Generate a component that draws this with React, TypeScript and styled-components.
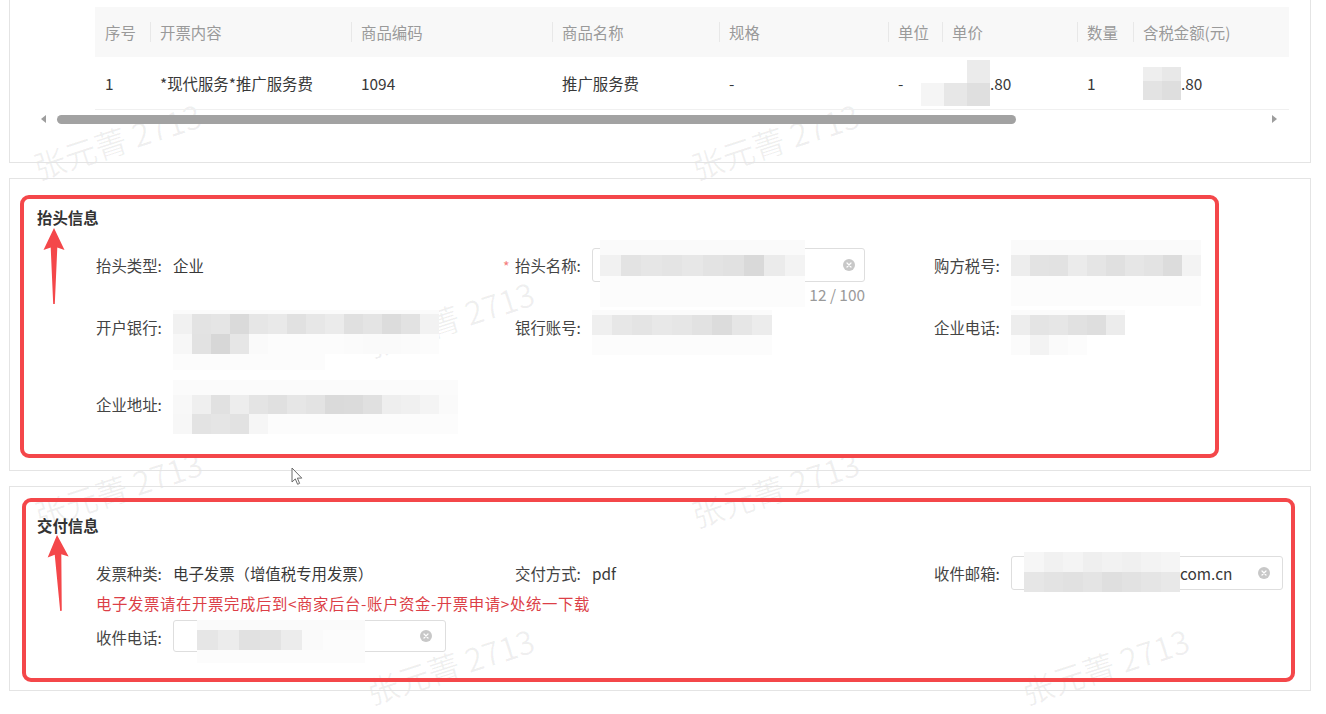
import React from "react";
import styled, { createGlobalStyle } from "styled-components";

const FONT = `"Noto Sans CJK SC", "Noto Sans", "Liberation Sans", sans-serif`;

const GlobalStyle = createGlobalStyle`
  * { box-sizing: border-box; }
  html, body { margin: 0; padding: 0; background: #ffffff; }
  body { font-family: ${FONT}; color: #333; }
`;

const Page = styled.main`
  position: relative;
  width: 1326px;
  height: 714px;
  overflow: hidden;
  padding-left: 9px;
  display: flex;
  flex-direction: column;
  gap: 15px;
  font-size: 15.4px;
`;

const Card = styled.section<{ $pt: number; $pb: number; $pl: number; $noTop?: boolean }>`
  position: relative;
  z-index: 1;
  flex: none;
  width: 1302px;
  border: 1px solid #e4e4e4;
  ${(p) => (p.$noTop ? "border-top: none;" : "")}
  padding: ${(p) => `${p.$pt}px 0 ${p.$pb}px ${p.$pl}px`};
`;

/* ---------- table ---------- */
const COLS = "55px 201px 201px 167px 169px 54px 135px 56px 156px";

const Table = styled.div`
  width: 1194px;
  margin-left: 57px;
`;

const HeadRow = styled.div`
  display: grid;
  grid-template-columns: ${COLS};
  height: 50px;
  background: #f8f8f8;
`;

const HeadCell = styled.div<{ $sep?: boolean }>`
  position: relative;
  display: flex;
  align-items: center;
  padding-left: 10px;
  color: #9a9a9a;
  white-space: nowrap;
  ${(p) =>
    p.$sep
      ? `&::before { content: ""; position: absolute; left: 0; top: 15px; width: 1px; height: 20px; background: #e8e8e8; }`
      : ""}
`;

const BodyRow = styled.div`
  display: grid;
  grid-template-columns: ${COLS};
  height: 53px;
  border-bottom: 1px solid #f0f0f0;
`;

const BodyCell = styled.div`
  display: flex;
  align-items: center;
  padding-left: 10px;
  color: #383838;
  white-space: nowrap;
`;

const ScrollBar = styled.div`
  display: flex;
  align-items: center;
  width: 1244px;
  height: 18px;
  padding: 0 5px 0 3px;
`;

const ArrowLeft = styled.span`
  flex: none;
  width: 0;
  height: 0;
  border-top: 4px solid transparent;
  border-bottom: 4px solid transparent;
  border-right: 5px solid #9d9d9d;
`;

const ArrowRight = styled.span`
  flex: none;
  width: 0;
  height: 0;
  border-top: 4px solid transparent;
  border-bottom: 4px solid transparent;
  border-left: 5px solid #9d9d9d;
`;

const Track = styled.div`
  flex: 1;
  display: flex;
  margin: 0 6px 0 11px;
  height: 9px;
`;

const Thumb = styled.div<{ $w: number }>`
  width: ${(p) => p.$w}px;
  height: 9px;
  border-radius: 5px;
  background: #a2a2a2;
`;

/* ---------- mosaic (censor blocks) ---------- */
type MRow = { h: number; c: string[] };
const rep = (n: number, c: string) => Array.from({ length: n }, () => c);

const MosaicBox = styled.div<{ $mt: number; $ml: number; $self: string }>`
  display: flex;
  flex-direction: column;
  flex: none;
  align-self: ${(p) => p.$self};
  margin-top: ${(p) => p.$mt}px;
  margin-left: ${(p) => p.$ml}px;
`;

const MosaicRow = styled.div`
  display: flex;
`;

const MosaicCell = styled.span<{ $w: number; $h: number; $c: string }>`
  display: block;
  flex: none;
  width: ${(p) => p.$w}px;
  height: ${(p) => p.$h}px;
  background: ${(p) => p.$c};
`;

function Mosaic({
  cw,
  rows,
  mt = 0,
  ml = 0,
  self = "flex-start",
}: {
  cw: number;
  rows: MRow[];
  mt?: number;
  ml?: number;
  self?: string;
}) {
  return (
    <MosaicBox $mt={mt} $ml={ml} $self={self}>
      {rows.map((r, i) => (
        <MosaicRow key={i}>
          {r.c.map((c, j) => (
            <MosaicCell key={j} $w={cw} $h={r.h} $c={c || "transparent"} />
          ))}
        </MosaicRow>
      ))}
    </MosaicBox>
  );
}

const mPrice: MRow[] = [
  { h: 23, c: ["", "", "#ebebeb"] },
  { h: 23, c: ["#f5f5f5", "#e7e7e7", "#dfdfdf"] },
];
const mTotal: MRow[] = [
  { h: 14, c: ["#eeeeee", "#e8e8e8"] },
  { h: 19, c: ["#e3e3e3", "#dedede"] },
];
const mName: MRow[] = [
  { h: 15, c: rep(10, "#fafafa") },
  { h: 21, c: ["#f1f1f1", "#e3e3e3", "#e6e6e6", "#e4e4e4", "#e7e7e7", "#e3e3e3", "#e1e1e1", "#d9d9d9", "#ebebeb", "#f3f3f3"] },
  { h: 31, c: rep(10, "#fcfcfc") },
];
const mTax: MRow[] = [
  { h: 15, c: rep(10, "#fafafa") },
  { h: 21, c: ["#ededed", "#e3e3e3", "#e2e2e2", "#ebebeb", "#e5e5e5", "#e0e0e0", "#e6e6e6", "#e3e3e3", "#dcdcdc", "#f3f3f3"] },
  { h: 30, c: rep(10, "#fcfcfc") },
];
const mBank: MRow[] = [
  { h: 4, c: rep(14, "#fbfbfb") },
  { h: 20, c: ["#f1f1f1", "#e3e3e3", "#e5e5e5", "#dadada", "#e6e6e6", "#e9e9e9", "#e1e1e1", "#e7e7e7", "#ebebeb", "#e0e0e0", "#e4e4e4", "#dcdcdc", "#e2e2e2", "#f2f2f2"] },
  { h: 20, c: ["#f7f7f7", "#e2e2e2", "#d7d7d7", "#e6e6e6", "#fafafa", "#fcfcfc", "#fcfcfc", "#fcfcfc", "#fcfcfc", "#fbfbfb", "#fafafa", "#fafafa", "#fbfbfb", "#fcfcfc"] },
  { h: 16, c: rep(8, "#fcfcfc") },
];
const mAcct: MRow[] = [
  { h: 5, c: rep(9, "#fbfbfb") },
  { h: 20, c: ["#efefef", "#e7e7e7", "#e4e4e4", "#e8e8e8", "#e6e6e6", "#e2e2e2", "#dcdcdc", "#e6e6e6", "#ececec"] },
  { h: 20, c: rep(9, "#fcfcfc") },
];
const mPhone: MRow[] = [
  { h: 5, c: rep(6, "#fbfbfb") },
  { h: 20, c: ["#ededed", "#e4e4e4", "#e6e6e6", "#e1e1e1", "#dedede", "#ececec"] },
  { h: 20, c: ["#fbfbfb", "#f3f3f3", "#fafafa", "#fcfcfc", "", ""] },
];
const mAddr: MRow[] = [
  { h: 15, c: rep(15, "#fbfbfb") },
  { h: 19, c: ["#f8f8f8", "#efefef", "#e1e1e1", "#ededed", "#e4e4e4", "#e0e0e0", "#e6e6e6", "#e3e3e3", "#dadada", "#dbdbdb", "#e0e0e0", "#eeeeee", "#f0f0f0", "#f4f4f4", "#fafafa"] },
  { h: 20, c: ["#f7f7f7", "#e3e3e3", "#e5e5e5", "#e2e2e2", "#f6f6f6", "#fcfcfc", "#fcfcfc", "#fcfcfc", "#fcfcfc", "#fcfcfc", "#fcfcfc", "#fcfcfc", "#fcfcfc", "#fcfcfc", "#fcfcfc"] },
];
const mEmail: MRow[] = [
  { h: 20, c: ["#f6f6f6", "#f1f1f1", "#f4f4f4", "#efefef", "#f2f2f2", "#f0f0f0", "#f3f3f3", "#f5f5f5"] },
  { h: 20, c: ["#e6e6e6", "#e3e3e3", "#e1e1e1", "#e4e4e4", "#dfdfdf", "#e2e2e2", "#e5e5e5", "#e8e8e8"] },
];
const mTel: MRow[] = [
  { h: 10, c: rep(8, "#fafafa") },
  { h: 20, c: ["#e6e6e6", "#ececec", "#e1e1e1", "#e3e3e3", "#ececec", "#fafafa", "#fcfcfc", "#fcfcfc"] },
  { h: 13, c: rep(8, "#fcfcfc") },
];

/* ---------- form ---------- */
const Title = styled.h3`
  margin: 0;
  font-size: 15.4px;
  font-weight: 700;
  line-height: 20px;
  color: #333;
`;

const FormGrid = styled.div<{ $rows: string; $mt: number }>`
  display: grid;
  grid-template-columns: 419px 419px 1fr;
  grid-template-rows: ${(p) => p.$rows};
  margin: ${(p) => p.$mt}px 0 0 59px;
`;

const Item = styled.div`
  display: flex;
  align-items: flex-start;
  min-width: 0;
`;

const Label = styled.span`
  flex: none;
  width: 77px;
  line-height: 34px;
  color: #444;
  white-space: nowrap;
`;

const Star = styled.span`
  display: inline-block;
  width: 12px;
  margin-left: -12px;
  color: #f47c7c;
  font-size: 14px;
`;

const Value = styled.span`
  line-height: 34px;
  color: #383838;
  white-space: nowrap;
`;

const Stack = styled.div`
  display: flex;
  flex-direction: column;
  width: 273px;
`;

const InputBox = styled.div<{ $w: number; $h: number; $pl: number; $pr: number }>`
  display: flex;
  align-items: center;
  flex: none;
  width: ${(p) => p.$w}px;
  height: ${(p) => p.$h}px;
  padding: 0 ${(p) => p.$pr}px 0 ${(p) => p.$pl}px;
  border: 1px solid #dedede;
  border-radius: 3px;
`;

const InputText = styled.span`
  color: #383838;
  white-space: nowrap;
`;

const Counter = styled.div`
  margin-top: 2px;
  line-height: 20px;
  text-align: right;
  color: #9a9a9a;
`;

const ClearSvg = styled.svg`
  flex: none;
  margin-left: auto;
  width: 12px;
  height: 12px;
`;

function ClearIcon() {
  return (
    <ClearSvg viewBox="0 0 12 12">
      <circle cx="6" cy="6" r="6" fill="#c8c8c8" />
      <path d="M4 4 L8 8 M8 4 L4 8" stroke="#ffffff" strokeWidth="1.2" strokeLinecap="round" />
    </ClearSvg>
  );
}

const Hint = styled.p`
  margin: 3px 0 0 59px;
  line-height: 20px;
  color: #dc3f47;
  letter-spacing: 0.6px;
  white-space: nowrap;
`;

/* ---------- annotations / overlays ---------- */
const Annot = styled.div<{ $l: number; $t: number; $w: number; $h: number }>`
  position: absolute;
  left: ${(p) => p.$l}px;
  top: ${(p) => p.$t}px;
  width: ${(p) => p.$w}px;
  height: ${(p) => p.$h}px;
  border: 4px solid #f4474a;
  border-radius: 9px;
  pointer-events: none;
  z-index: 2;
`;

const ArrowSvg = styled.svg<{ $l: number; $t: number; $rot: number }>`
  position: absolute;
  left: ${(p) => p.$l}px;
  top: ${(p) => p.$t}px;
  width: 28px;
  height: 82px;
  transform-origin: 14px 3px;
  transform: rotate(${(p) => p.$rot}deg);
  z-index: 2;
  pointer-events: none;
`;

function RedArrow({ l, t, rot = 0 }: { l: number; t: number; rot?: number }) {
  return (
    <ArrowSvg $l={l} $t={t} $rot={rot} viewBox="0 0 28 82">
      <polygon points="14,3 24.5,25 17.3,22.5 14.8,79 13.2,79 10.7,22.5 3.5,25" fill="#f4474a" />
    </ArrowSvg>
  );
}

const WatermarkLayer = styled.div`
  position: absolute;
  inset: 0;
  z-index: 0;
  pointer-events: none;
  overflow: hidden;
`;

const Watermark = styled.span<{ $x: number; $y: number }>`
  position: absolute;
  left: ${(p) => p.$x}px;
  top: ${(p) => p.$y}px;
  transform: translate(-50%, -50%) rotate(-18deg);
  font-size: 32px;
  color: rgba(0, 0, 0, 0.06);
  white-space: nowrap;
`;

const CursorSvg = styled.svg`
  position: absolute;
  left: 291px;
  top: 467px;
  width: 12px;
  height: 19px;
  z-index: 3;
  pointer-events: none;
`;

const WM_POS = [
  [117, 140],
  [775, 140],
  [450, 318],
  [118, 488],
  [775, 488],
  [450, 665],
  [1105, 665],
];

const HEADERS = ["序号", "开票内容", "商品编码", "商品名称", "规格", "单位", "单价", "数量", "含税金额(元)"];

export default function App() {
  return (
    <>
      <GlobalStyle />
      <Page>
        <WatermarkLayer>
          {WM_POS.map(([x, y], i) => (
            <Watermark key={i} $x={x} $y={y}>
              张元菁 2713
            </Watermark>
          ))}
        </WatermarkLayer>

        {/* goods table */}
        <Card $noTop $pt={7} $pb={34} $pl={28}>
          <Table>
            <HeadRow>
              {HEADERS.map((h, i) => (
                <HeadCell key={h} $sep={i > 0}>
                  {h}
                </HeadCell>
              ))}
            </HeadRow>
            <BodyRow>
              <BodyCell>1</BodyCell>
              <BodyCell>*现代服务*推广服务费</BodyCell>
              <BodyCell>1094</BodyCell>
              <BodyCell>推广服务费</BodyCell>
              <BodyCell>-</BodyCell>
              <BodyCell>-</BodyCell>
              <BodyCell>
                <Mosaic cw={23} rows={mPrice} ml={-31} self="center" />
                .80
              </BodyCell>
              <BodyCell>1</BodyCell>
              <BodyCell>
                <Mosaic cw={19} rows={mTotal} self="center" />
                .80
              </BodyCell>
            </BodyRow>
          </Table>
          <ScrollBar>
            <ArrowLeft />
            <Track>
              <Thumb $w={959} />
            </Track>
            <ArrowRight />
          </ScrollBar>
        </Card>

        {/* header info */}
        <Card $pt={28} $pb={35} $pl={27}>
          <Title>抬头信息</Title>
          <FormGrid $rows="62px 77px 48px" $mt={21}>
            <Item>
              <Label>抬头类型:</Label>
              <Value>企业</Value>
            </Item>
            <Item>
              <Label>
                <Star>*</Star>抬头名称:
              </Label>
              <Stack>
                <InputBox $w={273} $h={34} $pl={7} $pr={9}>
                  <Mosaic cw={20.5} rows={mName} mt={-9} />
                  <ClearIcon />
                </InputBox>
                <Counter>12 / 100</Counter>
              </Stack>
            </Item>
            <Item>
              <Label>购方税号:</Label>
              <Mosaic cw={19} rows={mTax} mt={-8} />
            </Item>

            <Item>
              <Label>开户银行:</Label>
              <Mosaic cw={19} rows={mBank} />
            </Item>
            <Item>
              <Label>银行账号:</Label>
              <Mosaic cw={20} rows={mAcct} />
            </Item>
            <Item>
              <Label>企业电话:</Label>
              <Mosaic cw={19} rows={mPhone} />
            </Item>

            <Item>
              <Label>企业地址:</Label>
              <Mosaic cw={19} rows={mAddr} mt={-7} />
            </Item>
          </FormGrid>
          <Annot $l={10} $t={16} $w={1199} $h={263} />
          <RedArrow l={30} t={46} />
        </Card>

        {/* delivery info */}
        <Card $pt={28} $pb={38} $pl={27}>
          <Title>交付信息</Title>
          <FormGrid $rows="34px" $mt={21}>
            <Item>
              <Label>发票种类:</Label>
              <Value>电子发票（增值税专用发票）</Value>
            </Item>
            <Item>
              <Label>交付方式:</Label>
              <Value>pdf</Value>
            </Item>
            <Item>
              <Label>收件邮箱:</Label>
              <InputBox $w={272} $h={34} $pl={12} $pr={12}>
                <Mosaic cw={19.5} rows={mEmail} mt={-5} />
                <InputText>com.cn</InputText>
                <ClearIcon />
              </InputBox>
            </Item>
          </FormGrid>
          <Hint>电子发票请在开票完成后到&lt;商家后台-账户资金-开票申请&gt;处统一下载</Hint>
          <FormGrid $rows="32px" $mt={7}>
            <Item>
              <Label>收件电话:</Label>
              <InputBox $w={273} $h={32} $pl={12} $pr={13}>
                <Mosaic cw={21} rows={mTel} mt={-1} ml={11} />
                <ClearIcon />
              </InputBox>
            </Item>
          </FormGrid>
          <Annot $l={12} $t={11} $w={1273} $h={184} />
          <RedArrow l={33} t={45} rot={-3} />
        </Card>

        <CursorSvg viewBox="0 0 12 19">
          <path
            d="M1 1 L1 15 L4.3 11.9 L6.6 17.3 L8.6 16.4 L6.4 11.1 L10.8 11.1 Z"
            fill="#ffffff"
            stroke="#6a6a6a"
            strokeWidth="1"
            strokeLinejoin="round"
          />
        </CursorSvg>
      </Page>
    </>
  );
}
